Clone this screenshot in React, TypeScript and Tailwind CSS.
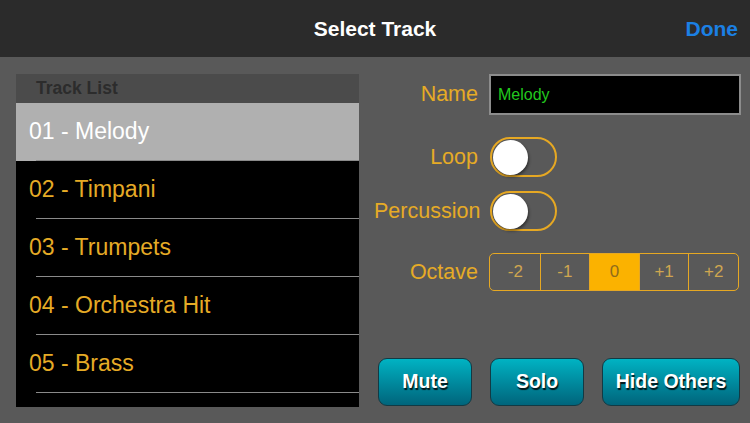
import React from "react";

const tracks = [
  "01 - Melody",
  "02 - Timpani",
  "03 - Trumpets",
  "04 - Orchestra Hit",
  "05 - Brass",
];

const octaves = ["-2", "-1", "0", "+1", "+2"];

function Toggle() {
  return (
    <div className="w-[67px] h-[40px] rounded-full border-2 border-[#e6a823] flex items-center pl-[1px]">
      <div className="w-[35px] h-[35px] rounded-full bg-white shadow-[1px_2px_3px_rgba(0,0,0,0.45)]" />
    </div>
  );
}

function TealButton({ label, width }: { label: string; width: string }) {
  return (
    <button
      className={`${width} h-[48px] rounded-[9px] border border-[#123a44] bg-gradient-to-b from-[#00b3c3] to-[#00657c] text-white font-bold text-[19.5px] [text-shadow:1px_1.5px_1px_rgba(0,0,0,0.85)]`}
    >
      {label}
    </button>
  );
}

export default function App() {
  return (
    <div className="w-[750px] h-[423px] bg-[#595959] flex flex-col overflow-hidden font-['Liberation_Sans',Arial,sans-serif]">
      <div className="h-[57px] bg-[#2b2b2b] relative flex items-center justify-center shrink-0">
        <span className="text-white font-bold text-[21px]">Select Track</span>
        <span className="absolute right-[12px] text-[#1b80e4] font-bold text-[21px]">
          Done
        </span>
      </div>

      <div className="flex pt-[17px] pl-[16px]">
        <div className="w-[343px] h-[333px] bg-black flex flex-col overflow-hidden">
          <div className="h-[29px] bg-[#4b4b4b] pl-[20px] flex items-center text-[17.5px] font-bold text-[#2c2c2c]">
            Track List
          </div>
          {tracks.map((t, i) => (
            <div
              key={t}
              className={`h-[58px] shrink-0 flex flex-col ${i === 0 ? "bg-[#b0b0b0]" : "bg-black"}`}
            >
              <div
                className={`flex-1 flex items-center pl-[13px] text-[23px] ${i === 0 ? "text-white" : "text-[#e6ab26]"}`}
              >
                {t}
              </div>
              <div className="ml-[20px] h-[1px] bg-[#8a8a8a]" />
            </div>
          ))}
        </div>

        <div className="ml-[15px] flex flex-col">
          <div className="grid grid-cols-[104px_auto] gap-x-[11px] items-center text-[21.5px] text-[#e6ab26]">
            <div className="text-right">Name</div>
            <div className="w-[252px] h-[41px] bg-black border-2 border-[#8c8c8c] flex items-center pl-[7px] text-[16px] text-[#22c81e]">
              Melody
            </div>

            <div className="text-right mt-[22px]">Loop</div>
            <div className="mt-[22px] pl-[1px]">
              <Toggle />
            </div>

            <div className="text-right mt-[14px]">Percussion</div>
            <div className="mt-[14px] pl-[1px]">
              <Toggle />
            </div>

            <div className="text-right mt-[22px]">Octave</div>
            <div className="mt-[22px] pl-[1px] flex w-[250px] h-[38px] rounded-[5px] border-[1.5px] border-[#e6a823] overflow-hidden">
              {octaves.map((o, i) => (
                <div
                  key={o}
                  className={`flex-1 flex items-center justify-center text-[17px] ${i > 0 ? "border-l-[1.5px] border-[#e6a823]" : ""} ${o === "0" ? "bg-[#fbb200] text-[#8f6c1c]" : "text-[#cfa650]"}`}
                >
                  {o}
                </div>
              ))}
            </div>
          </div>

          <div className="flex gap-[18px] mt-[67px] ml-[4px]">
            <TealButton label="Mute" width="w-[94px]" />
            <TealButton label="Solo" width="w-[94px]" />
            <TealButton label="Hide Others" width="w-[138px]" />
          </div>
        </div>
      </div>
    </div>
  );
}
